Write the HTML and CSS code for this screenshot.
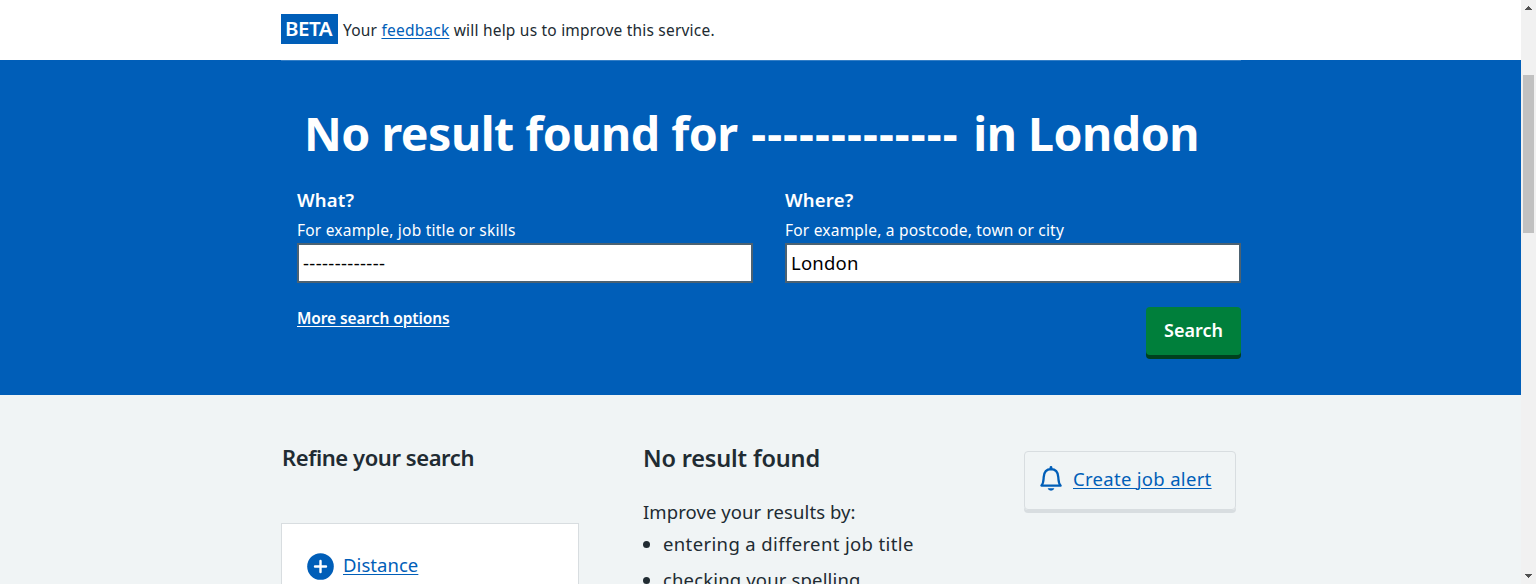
FILE: index.html
```
<!DOCTYPE html>
<html lang="en">
<head>
<meta charset="utf-8">
<title>No result found - Search results</title>
<link rel="stylesheet" href="styles.css">
</head>
<body>
<div class="page">
  <div class="beta">
    <div class="container beta__inner">
      <strong class="beta__tag">BETA</strong>
      <p class="beta__text"><span>Your </span><a class="link" href="#">feedback</a><span> will help us to improve this service.</span></p>
    </div>
  </div>

  <section class="hero">
    <div class="container hero__inner">
      <h1 class="hero__title">No result found for <span class="hero__term">-------------</span> in London</h1>
      <form class="search">
        <div class="search__field">
          <label class="search__label" for="what">What?</label>
          <span class="search__hint">For example, job title or skills</span>
          <input class="search__input search__input--term" id="what" type="text" value="-------------">
        </div>
        <div class="search__field">
          <label class="search__label" for="where">Where?</label>
          <span class="search__hint">For example, a postcode, town or city</span>
          <input class="search__input" id="where" type="text" value="London">
        </div>
        <a class="search__more" href="#">More search options</a>
        <button class="search__button" type="button">Search</button>
      </form>
    </div>
  </section>

  <main class="container main">
    <aside class="refine">
      <h2 class="refine__title">Refine your search</h2>
      <div class="refine__card">
        <svg class="refine__icon" viewBox="0 0 27 27"><circle cx="13.5" cy="13.5" r="13.3" fill="#005eb8"/><path d="M13.5 8v11M8 13.5h11" stroke="#fff" stroke-width="2.4" stroke-linecap="round"/></svg>
        <a class="link refine__link" href="#">Distance</a>
      </div>
    </aside>
    <section class="results">
      <h2 class="results__title">No result found</h2>
      <p class="results__lead">Improve your results by:</p>
      <ul class="tips">
        <li class="tips__item tips__item--title">entering a different job title</li>
        <li class="tips__item">checking your spelling</li>
      </ul>
    </section>
    <div class="alert">
      <svg class="alert__icon" viewBox="0 0 24 26" fill="none"><path d="M2.4 19.6C4.6 17.5 4.4 15 4.7 11.2C5 6.3 7.6 3.2 12 3.2S19 6.3 19.3 11.2C19.6 15 19.4 17.5 21.6 19.6Z" stroke="#005eb8" stroke-width="2.3" stroke-linejoin="round"/><path d="M12 1.4V3" stroke="#005eb8" stroke-width="2.8" stroke-linecap="round"/><path d="M8.6 22.2H15.4A3.5 3.2 0 0 1 8.6 22.2Z" fill="#005eb8"/></svg>
      <a class="link alert__link" href="#">Create job alert</a>
    </div>
  </main>
</div>

<div class="scrollbar">
  <svg class="scrollbar__arrow" viewBox="0 0 7 4"><path d="M3 0h1v1h1v1h1v1h1v1H0V3h1V2h1V1h1z" fill="#505050"/></svg>
  <div class="scrollbar__thumb"></div>
  <svg class="scrollbar__arrow scrollbar__arrow--down" viewBox="0 0 7 4"><path d="M0 0h7v1H6v1H5v1H4v1H3V3H2V2H1V1H0z" fill="#505050"/></svg>
</div>
</body>
</html>
```
FILE: styles.css
```
* { box-sizing: border-box; }

body {
  display: flex;
  height: 584px;
  margin: 0;
  overflow: hidden;
  background: #f0f4f5;
  color: #212b32;
  font: 18.5px/28px "Noto Sans", sans-serif;
}

h1, h2, p, ul { margin: 0; padding: 0; }

.page { width: 1521px; height: 584px; overflow: hidden; }
.container { width: 960px; margin: 0 auto 0 281px; }

.link {
  color: #005eb8;
  text-decoration: underline;
  text-decoration-thickness: 1px;
  text-underline-offset: 2px;
}

/* Beta banner */
.beta { height: 60px; background: #fff; }
.beta__inner { display: flex; padding-top: 14px; }
.beta__tag {
  width: 57px;
  height: 30px;
  padding-left: 4px;
  background: #005eb8;
  color: #fff;
  font-size: 20.5px;
  font-weight: 600;
  line-height: 29px;
  letter-spacing: -0.5px;
}
.beta__text {
  margin: 4px 0 0 5px;
  font-size: 15.5px;
  line-height: 24px;
  letter-spacing: 0.21px;
  white-space: pre;
}

/* Search hero */
.hero { height: 335px; background: #005eb8; color: #fff; }
.hero__inner { border-top: 1px solid #337ec6; padding-top: 44px; }
.hero__title {
  padding-left: 23px;
  font-size: 46.5px;
  font-weight: 700;
  line-height: 56px;
  letter-spacing: -0.5px;
  white-space: nowrap;
}
.hero__term { margin: 0 3px 0 2px; letter-spacing: 1.08px; }
.search {
  display: grid;
  grid-template-columns: 456px 456px;
  column-gap: 32px;
  padding: 25px 0 0 16px;
}
.search__label {
  display: block;
  font-weight: 600;
  letter-spacing: 0.2px;
}
.search__hint {
  display: block;
  margin-top: 4px;
  font-size: 15.5px;
  line-height: 24px;
  letter-spacing: 0.21px;
}
.search__input {
  display: block;
  width: 456px;
  height: 40px;
  margin-top: 1px;
  padding: 0 3px 2px 4px;
  border: 2px solid #4c6272;
  border-radius: 0;
  background: #fff;
  color: #000;
  font: 18.5px "Noto Sans", sans-serif;
  letter-spacing: 0.2px;
}
.search__input--term { letter-spacing: 0.38px; }
.search__more {
  justify-self: start;
  margin-top: 23px;
  color: #fff;
  font-size: 15.5px;
  font-weight: 600;
  line-height: 24px;
  letter-spacing: -0.1px;
  text-underline-offset: 2px;
  text-decoration-thickness: 1px;
}
.search__button {
  justify-self: end;
  width: 95px;
  height: 48px;
  margin-top: 24px;
  padding: 0 0 2px;
  border: 0;
  border-radius: 4px;
  background: #007f3b;
  box-shadow: 0 4px 0 #00401e;
  color: #fff;
  font: 600 18px/28px "Noto Sans", sans-serif;
}

/* Results */
.main {
  display: grid;
  grid-template-columns: 298px 317px 212px;
  column-gap: 64px;
  align-items: start;
}
.refine { padding-top: 46px; }
.refine__title {
  padding-left: 1px;
  font-size: 22px;
  font-weight: 600;
  line-height: 32px;
  letter-spacing: -0.43px;
}
.refine__card {
  display: flex;
  height: 120px;
  margin-top: 50px;
  padding: 28px 24px;
  border: 1px solid #d8dde0;
  background: #fff;
}
.refine__icon { width: 27px; height: 27px; margin: 0.5px 9.5px 0 0.5px; }
.refine__link { margin-top: -1px; letter-spacing: 0.05px; }
.results { padding-top: 47px; }
.results__title {
  font-size: 23.5px;
  font-weight: 600;
  line-height: 32px;
  letter-spacing: -0.17px;
}
.results__lead { margin-top: 24px; letter-spacing: 0.08px; }
.tips { margin-top: 4px; padding-left: 20px; }
.tips__item { margin-bottom: 8px; letter-spacing: 0.15px; }
.tips__item--title { letter-spacing: 0.37px; }

.alert {
  display: flex;
  height: 59px;
  margin-top: 56px;
  padding: 14px 0 0 14px;
  border: 1px solid #d8dde0;
  border-radius: 4px;
  box-shadow: 0 3px 0 #d8dde0;
}
.alert__icon { width: 24px; height: 26px; margin-right: 10px; }
.alert__link { margin-top: -1px; letter-spacing: 0.3px; white-space: nowrap; }

/* Scrollbar */
.scrollbar {
  display: flex;
  flex-direction: column;
  width: 15px;
  height: 584px;
  padding: 6px 2px;
  background: #f1f1f1;
}
.scrollbar__arrow { width: 7px; height: 4px; margin-left: 2px; }
.scrollbar__arrow--down { margin-top: auto; }
.scrollbar__thumb { width: 11px; height: 158px; margin-top: 65px; background: #c1c1c1; }
```
